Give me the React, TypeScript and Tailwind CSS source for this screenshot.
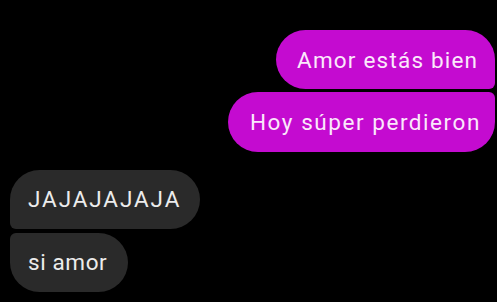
import React from "react";

export default function App() {
  const font = { fontFamily: "Roboto, 'Noto Sans', sans-serif" };
  return (
    <div className="w-[497px] h-[302px] bg-black overflow-hidden" style={font}>
      <div className="flex flex-col items-end gap-[3px] pt-[30px] pr-[2px]">
        <div className="h-[59px] w-[219px] flex items-center pl-[21px] pt-[1px] bg-[#c40bd0] text-[#fbe8fb] text-[22.5px] tracking-[1.2px] leading-none rounded-l-[30px] rounded-tr-[30px] rounded-br-[6px] whitespace-nowrap">
          Amor estás bien
        </div>
        <div className="h-[60px] w-[267px] flex items-center pl-[22px] bg-[#c40bd0] text-[#fbe8fb] text-[22.5px] tracking-[1.55px] leading-none rounded-l-[30px] rounded-br-[30px] rounded-tr-[6px] whitespace-nowrap">
          Hoy súper perdieron
        </div>
      </div>
      <div className="flex flex-col items-start gap-[4px] pt-[18px] pl-[10px]">
        <div className="h-[59px] w-[190px] flex items-center pl-[18px] bg-[#2a2a2a] text-[#ececec] text-[22.5px] tracking-[1.9px] leading-none rounded-r-[30px] rounded-tl-[30px] rounded-bl-[6px] whitespace-nowrap">
          JAJAJAJAJA
        </div>
        <div className="h-[59px] w-[118px] flex items-center pl-[18px] bg-[#2a2a2a] text-[#ececec] text-[22.5px] tracking-[0.6px] leading-none rounded-r-[30px] rounded-bl-[30px] rounded-tl-[6px] whitespace-nowrap">
          si amor
        </div>
      </div>
    </div>
  );
}
